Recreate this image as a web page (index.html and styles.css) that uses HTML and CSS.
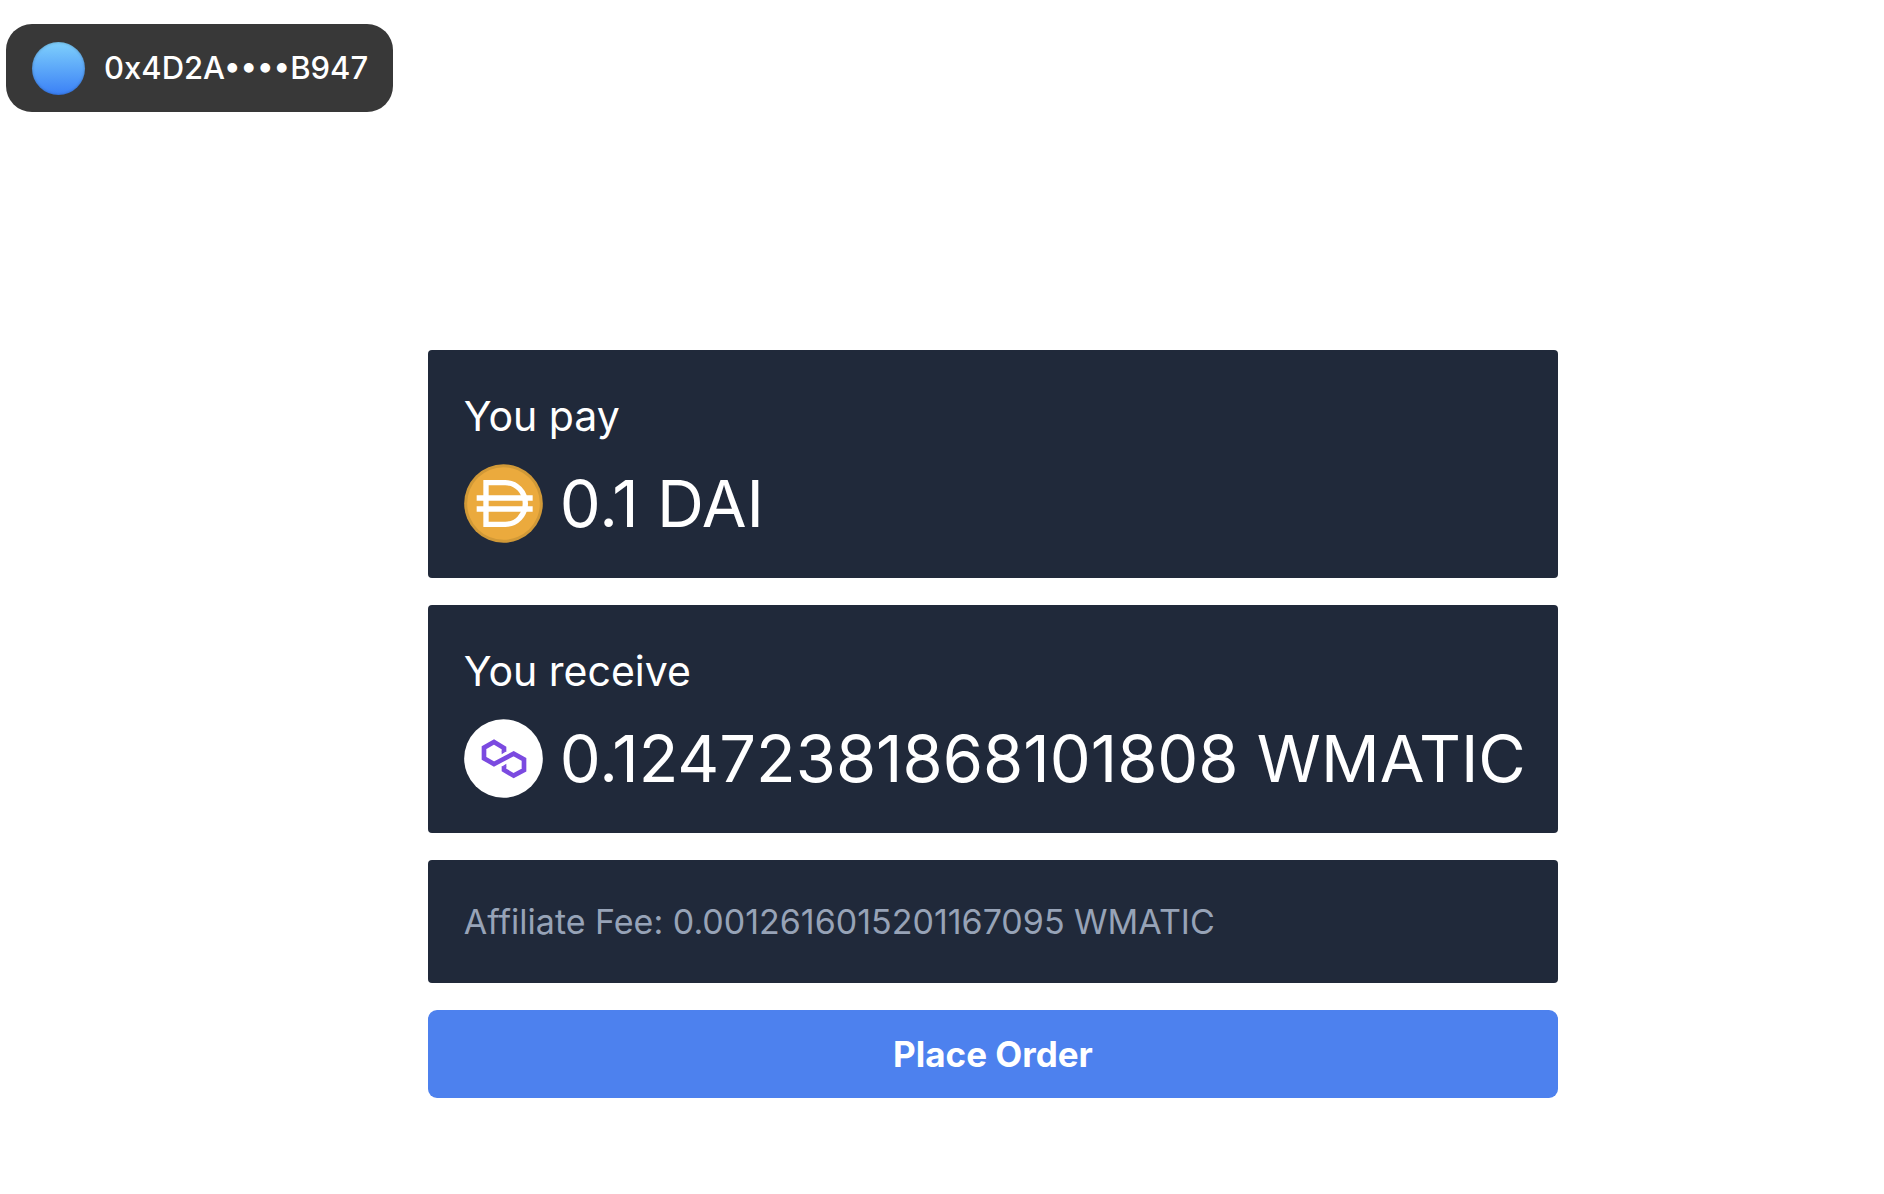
FILE: index.html
```html
<!DOCTYPE html>
<html lang="en">
<head>
  <meta charset="utf-8">
  <meta name="viewport" content="width=device-width, initial-scale=1">
  <title>Place Order</title>
  <link rel="stylesheet" href="styles.css">
</head>
<body>
  <header class="header">
    <button class="wallet" type="button">
      <span class="wallet-avatar"></span>
      <span>0x4D2A••••B947</span>
    </button>
  </header>
  <main class="order">
    <section class="card">
      <h2 class="card-label">You pay</h2>
      <div class="amount">
        <svg class="token" viewBox="0 0 237 237" aria-hidden="true">
          <circle cx="118.500" cy="118.500" r="118" fill="#d19937"/>
          <circle cx="118.500" cy="118.500" r="109" fill="#ebaa3d"/>
          <g fill="none" stroke="#fff" stroke-width="16">
            <path d="M66 56H124C158 56 184 84 184 118.500S158 181 124 181H66Z"/>
            <path d="M38 102H206M38 135H206"/>
          </g>
        </svg>
        <span>0.1 DAI</span>
      </div>
    </section>
    <section class="card">
      <h2 class="card-label">You receive</h2>
      <div class="amount">
        <svg class="token" viewBox="25 22 237 237" aria-hidden="true">
          <circle cx="143.500" cy="140.500" r="118" fill="#fff"/>
          <path d="M145 120V109L115 91L85 108V140L115 157L174 126L205 143V175L174 192L145 175V164" fill="none" stroke="#7b4ae0" stroke-width="14"/>
          <path d="M138 119H152L138 128ZM138 165H152V156Z" fill="#7b4ae0"/>
        </svg>
        <span>0.12472381868101808 WMATIC</span>
      </div>
    </section>
    <section class="card">
      <p class="fee">Affiliate Fee: 0.0012616015201167095 WMATIC</p>
    </section>
    <button class="submit" type="button">Place Order</button>
  </main>
</body>
</html>
```
FILE: styles.css
```css
* {
  box-sizing: border-box;
}

body {
  margin: 0;
  background: #fff;
  font-family: Inter, "Liberation Sans", sans-serif;
}

button {
  border: 0;
  font-family: inherit;
  color: #fff;
  cursor: pointer;
}

.header {
  padding: 24px 6px 0;
}

.wallet {
  display: flex;
  align-items: center;
  gap: 19px;
  height: 88px;
  padding: 0 25px 0 26px;
  border-radius: 26px;
  background: #383838;
  font-size: 31px;
  font-weight: 500;
  line-height: 40px;
}

.wallet-avatar {
  width: 53px;
  height: 53px;
  border-radius: 50%;
  background: linear-gradient(#7fd0fc, #3a80f6);
  box-shadow: inset 0 0 3px rgba(0, 0, 0, 0.3);
}

.order {
  display: flex;
  flex-direction: column;
  gap: 27px;
  width: calc(60% + 102px);
  margin: 238px auto 0;
  padding-left: 102px;
}

.card {
  padding: 36px 36px 35px;
  border-radius: 4px;
  background: #20293a;
  color: #fff;
}

.card-label {
  margin: 0 0 18px;
  font-size: 41px;
  font-weight: 400;
  line-height: 60px;
}

.amount {
  display: flex;
  align-items: center;
  gap: 17px;
  font-size: 65px;
  line-height: 79px;
  white-space: nowrap;
}

.token {
  flex: none;
  width: 79px;
  height: 79px;
}

.fee {
  margin: 0;
  font-size: 34px;
  line-height: 52px;
  color: #97a3b7;
}

.submit {
  height: 88px;
  border-radius: 9px;
  background: #4d81ee;
  font-size: 35px;
  font-weight: 700;
}
```
